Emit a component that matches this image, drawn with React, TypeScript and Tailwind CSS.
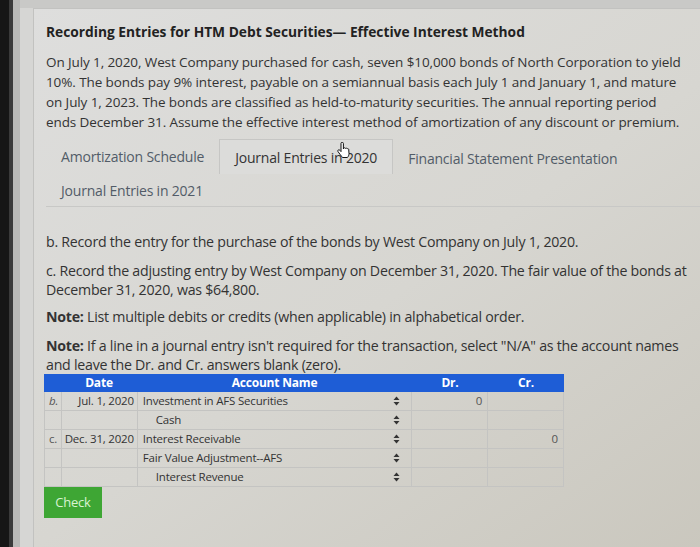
import React from "react";

const Arrows = () => (
  <svg width="7" height="10" viewBox="0 0 7 10" className="block">
    <path d="M3.5 0.5 L6.5 4 L0.5 4 Z" fill="#333" />
    <path d="M3.5 9.5 L6.5 6 L0.5 6 Z" fill="#333" />
  </svg>
);

type Row = { l?: string; d?: string; a: string; ind?: boolean; dr?: string; cr?: string };
const rows: Row[] = [
  { l: "b.", d: "Jul. 1, 2020", a: "Investment in AFS Securities", dr: "0" },
  { a: "Cash", ind: true },
  { l: "c.", d: "Dec. 31, 2020", a: "Interest Receivable", cr: "0" },
  { a: "Fair Value Adjustment--AFS" },
  { a: "Interest Revenue", ind: true },
];

export default function App() {
  return (
    <div className="w-[700px] h-[547px] overflow-hidden flex bg-[#cfcfcd] font-['Open_Sans',sans-serif] text-[#333]">
      <div className="w-[9px] shrink-0 bg-[#161616]" />
      <div className="w-[4px] shrink-0 bg-[#3a3a3a]" />
      <div className="w-[7px] shrink-0 bg-[#b9b9b7]" />
      <div className="flex-1 flex flex-col bg-[#d3d3d1]">
        <div className="h-[8px] shrink-0 bg-[#c9c9c7]" />
        <div className="flex-1 flex">
          <div className="w-[13px] shrink-0 bg-[#d6d6d4]" />
          <div className="relative flex-1 border-l border-t border-[#c2c2c0] bg-linear-to-br from-[#dededd] via-[#d7d6d1] to-[#c8c5bb] pl-[12px] overflow-hidden">
            <div className="w-[760px]">
              <h1 className="mt-[13px] text-[13.75px] leading-[20px] font-bold text-[#222] whitespace-nowrap">
                Recording Entries for HTM Debt Securities— Effective Interest Method
              </h1>
              <p className="mt-[10px] text-[13.5px] leading-[20px] whitespace-nowrap tracking-[-0.1px]">
                On July 1, 2020, West Company purchased for cash, seven $10,000 bonds of North Corporation to yield
                <br />
                10%. The bonds pay 9% interest, payable on a semiannual basis each July 1 and January 1, and mature
                <br />
                on July 1, 2023. The bonds are classified as held-to-maturity securities. The annual reporting period
                <br />
                ends December 31. Assume the effective interest method of amortization of any discount or premium.
              </p>
            </div>

            <div className="mt-[7px] mr-[-20px] border-b border-[#c8c8c6] text-[14px] text-[#525c68] tracking-[-0.2px]">
              <div className="flex h-[35px] items-center">
                <div className="px-[15px] h-full flex items-center">Amortization Schedule</div>
                <div className="px-[15px] h-full flex items-center border border-b-0 border-[#c6c6c4] bg-[#dcdcda] text-[#333]">
                  Journal Entries in 2020
                </div>
                <div className="px-[15px] h-full flex items-center pt-[4px]">Financial Statement Presentation</div>
              </div>
              <div className="flex h-[32px] items-center">
                <div className="px-[15px]">Journal Entries in 2021</div>
              </div>
            </div>

            <svg className="absolute left-[303px] top-[133px]" width="14" height="17" viewBox="0 0 14 17">
              <path
                d="M4 1.5c0-.8.6-1.3 1.2-1.3s1.2.5 1.2 1.3V7l.3-1c.6-.4 1.4-.2 1.7.4.5-.4 1.3-.3 1.7.3.5-.3 1.300-.1 1.6.6l.3 4.2c0 1.6-.6 3-1.6 4H5.5C4.7 14.5 2 11 1 9.6c-.5-.7-.2-1.5.5-1.7.6-.2 1.2.1 1.6.6L4 9.6V1.5z"
                fill="#fff"
                stroke="#111"
                strokeWidth="1"
              />
            </svg>

            <div className="text-[14.2px] leading-[19px] tracking-[-0.25px] whitespace-nowrap">
              <p className="mt-[25px]">b. Record the entry for the purchase of the bonds by West Company on July 1, 2020.</p>
              <p className="mt-[10px]">
                c. Record the adjusting entry by West Company on December 31, 2020. The fair value of the bonds at
                <br />
                December 31, 2020, was $64,800.
              </p>
              <p className="mt-[8px]">
                <b>Note:</b> List multiple debits or credits (when applicable) in alphabetical order.
              </p>
              <p className="mt-[10px]">
                <b>Note:</b> If a line in a journal entry isn't required for the transaction, select "N/A" as the account names
                <br />
                and leave the Dr. and Cr. answers blank (zero).
              </p>
            </div>

            <div className="mt-0 ml-[-2px] w-[520px] text-[11.5px] tracking-[-0.2px]">
              <div className="flex h-[18px] items-center bg-[#1e5dd6] text-white font-bold text-[12px]">
                <div className="w-[17px]" />
                <div className="w-[76px] text-center">Date</div>
                <div className="w-[275px] text-center">Account Name</div>
                <div className="w-[76px] text-center">Dr.</div>
                <div className="w-[76px] text-center">Cr.</div>
              </div>
              <div className="border-l border-[#c4c4c2]">
                {rows.map((r, i) => (
                  <div key={i} className="flex h-[19px] border-b border-[#c4c4c2]">
                    <div className="w-[17px] border-r border-[#c4c4c2] pl-[4px] flex items-center italic text-[#555]">
                      {r.l === "b." ? r.l : r.l ? <span className="not-italic">{r.l}</span> : null}
                    </div>
                    <div className="w-[76px] border-r border-[#c4c4c2] pr-[3px] flex items-center justify-end">{r.d}</div>
                    <div className="w-[275px] border-r border-[#c4c4c2] flex items-center justify-between pr-[11px]">
                      <span className={r.ind ? "pl-[18px]" : "pl-[5px]"}>{r.a}</span>
                      <Arrows />
                    </div>
                    <div className="w-[76px] border-r border-[#c4c4c2] flex items-center justify-end pr-[5px] text-[#555]">{r.dr}</div>
                    <div className="w-[76px] border-r border-[#c4c4c2] flex items-center justify-end pr-[5px] text-[#555]">{r.cr}</div>
                  </div>
                ))}
              </div>
            </div>

            <button className="mt-0 ml-[-2px] w-[58px] h-[31px] bg-[#3ea634] text-[#d9f2d2] text-[13px] flex items-center justify-center tracking-[-0.2px]">
              Check
            </button>
          </div>
        </div>
      </div>
    </div>
  );
}
